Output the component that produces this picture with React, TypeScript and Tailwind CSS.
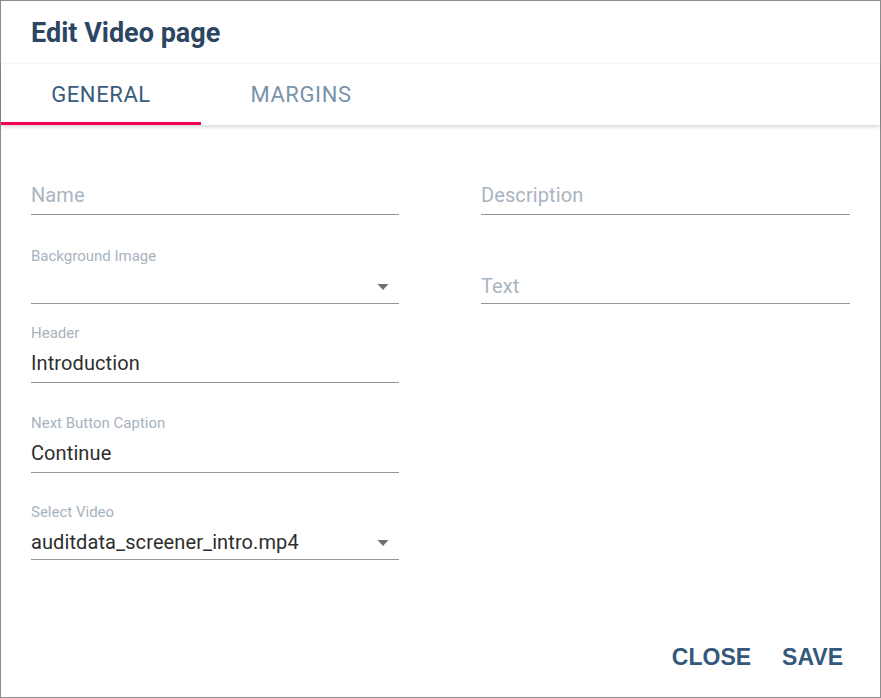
import { useState } from 'react'

type FieldProps = {
  label?: string
  value?: string
  placeholder?: string
  select?: boolean
  className?: string
  tight?: boolean
}

function Field({ label, value, placeholder, select, className = '', tight }: FieldProps) {
  return (
    <div className={`flex flex-col ${className}`}>
      <div className="h-[16px] text-[15px] leading-[16px] text-[#a8b3be]">{label}</div>
      <div
        className={`flex items-center border-b border-[#959595] pt-[7px] ${tight ? 'pb-[2px]' : 'pb-[4px]'}`}
      >
        <div className={`h-[30px] flex-1 text-[20px] leading-[30px] tracking-[0.1px] ${value ? 'text-[#2e2e2e]' : 'text-[#a9b5c1]'}`}>
          {value ?? placeholder}
        </div>
        {select && (
          <svg width="12" height="6" viewBox="0 0 12 6" className="mr-[10px] mt-[1px]">
            <path d="M0.5 0 L11.5 0 L6 6 Z" fill="#707070" />
          </svg>
        )}
      </div>
    </div>
  )
}

export default function App() {
  const [tab, setTab] = useState(0)

  return (
    <div
      className="flex h-[698px] w-[881px] flex-col border border-[#8c8c8c] bg-white"
      style={{ fontFamily: 'Roboto, "Liberation Sans", sans-serif' }}
    >
      <h1 className="pl-[30px] pt-[16px] pb-[15px] text-[27px] font-bold leading-[32px] text-[#2b4661]">
        Edit Video page
      </h1>

      <div className="flex h-[61px] bg-white shadow-[0_2px_4px_rgba(0,0,0,0.16),0_-1px_2px_rgba(0,0,0,0.03)]">
        {['GENERAL', 'MARGINS'].map((t, i) => (
          <button
            key={t}
            onClick={() => setTab(i)}
            className={`relative flex w-[200px] items-center justify-center text-[22px] tracking-[0.6px] ${
              tab === i ? 'text-[#3b5b7a]' : 'text-[#7a93ab]'
            }`}
          >
            {t}
            {tab === i && <span className="absolute bottom-0 left-0 h-[3px] w-full bg-[#f50057]" />}
          </button>
        ))}
      </div>

      <div className="flex gap-[82px] pl-[30px]">
        <div className="flex w-[368px] flex-col">
          <Field placeholder="Name" className="mt-[32px]" />
          <Field label="Background Image" select tight className="mt-[33px]" />
          <Field label="Header" value="Introduction" className="mt-[21px]" />
          <Field label="Next Button Caption" value="Continue" className="mt-[32px]" />
          <Field label="Select Video" value="auditdata_screener_intro.mp4" select tight className="mt-[31px]" />
        </div>
        <div className="flex w-[369px] flex-col">
          <Field placeholder="Description" className="mt-[32px]" />
          <Field placeholder="Text" tight className="mt-[33px]" />
        </div>
      </div>

      <div
        className="mt-auto flex justify-end gap-[31px] pr-[37px] pb-[28px] text-[23px] font-bold leading-[24px] text-[#34587a]"
        style={{ fontFamily: '"Liberation Sans", Arial, sans-serif' }}
      >
        <button>CLOSE</button>
        <button>SAVE</button>
      </div>
    </div>
  )
}
